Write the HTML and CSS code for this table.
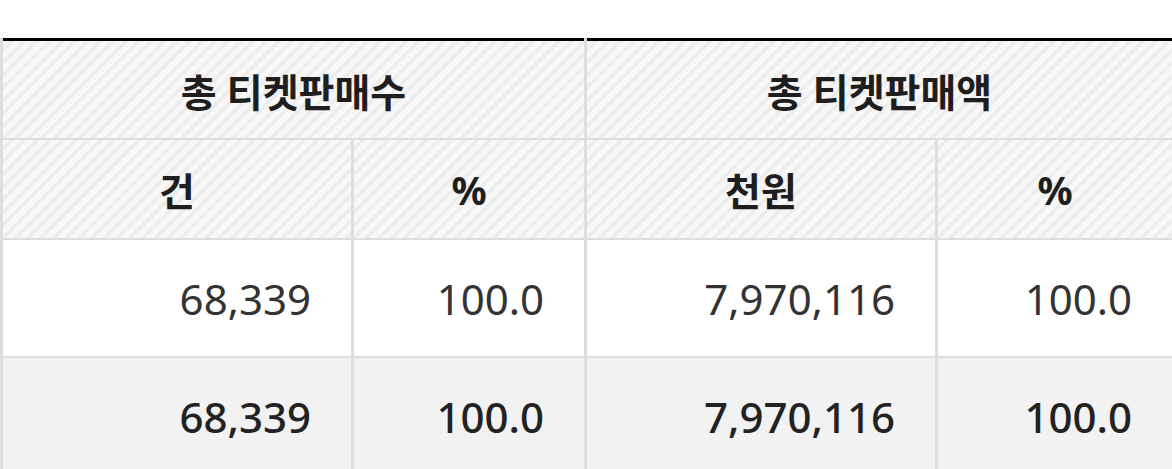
FILE: index.html
```html
<!DOCTYPE html>
<html lang="ko">
<head>
<meta charset="utf-8">
<link rel="stylesheet" href="styles.css">
</head>
<body>
<div class="stats">
  <div class="cell head group">총 티켓판매수</div>
  <div class="cell head group">총 티켓판매액</div>
  <div class="cell head sub">건</div>
  <div class="cell head sub">%</div>
  <div class="cell head sub">천원</div>
  <div class="cell head sub">%</div>
  <div class="cell data">68,339</div>
  <div class="cell data">100.0</div>
  <div class="cell data">7,970,116</div>
  <div class="cell data">100.0</div>
  <div class="cell data total">68,339</div>
  <div class="cell data total">100.0</div>
  <div class="cell data total">7,970,116</div>
  <div class="cell data total">100.0</div>
</div>
</body>
</html>
```
FILE: styles.css
```css
html, body {
  margin: 0;
  padding: 0;
  background: #fff;
}
body {
  padding-top: 38px;
  font-family: "Noto Sans", "Noto Sans CJK KR", sans-serif;
}
.stats {
  display: grid;
  grid-template-columns: 348px 230px 348px 1fr;
  grid-template-rows: 100px 98px 116px 116px;
  column-gap: 3px;
  row-gap: 2px;
  padding-left: 3px;
  background: #dedede;
}
.cell {
  display: flex;
  align-items: center;
  box-sizing: border-box;
}
.head {
  justify-content: center;
  font-size: 39px;
  font-weight: 700;
  color: #1e1e1e;
  background-color: #f6f6f6;
  background-image: repeating-linear-gradient(135deg, #f8f8f8 0px, #f8f8f8 3.5px, #ebebeb 5.5px, #ebebeb 6.5px, #f8f8f8 9px);
}
.group {
  grid-column: span 2;
  border-top: 3px solid #000;
}
.data {
  justify-content: flex-end;
  padding-right: 40px;
  font-size: 42px;
  font-weight: 400;
  color: #333;
  background: #fff;
}
.total {
  font-weight: 500;
  color: #222;
  background: #f2f2f2;
}
```
